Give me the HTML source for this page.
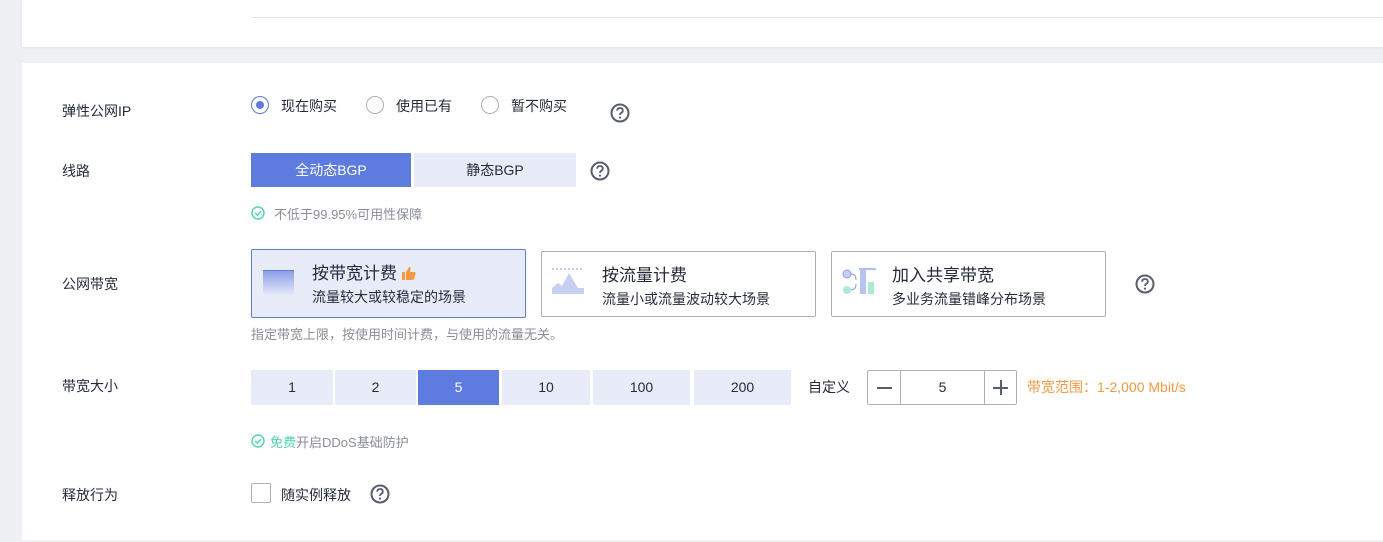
<!DOCTYPE html>
<html><head><meta charset="utf-8"><style>
body{margin:0;width:1383px;height:542px;background:#eff0f4;position:relative;overflow:hidden;font-family:"Liberation Sans","Noto Sans CJK SC",sans-serif;font-size:14px;color:#252b3a}
.a{position:absolute}
.card{position:absolute;left:22px;right:0;background:#fff}
.lbl{position:absolute;left:62px;font-size:14px;color:#252b3a}
.radio{position:absolute;width:16px;height:16px;border:1px solid #adb0b8;border-radius:50%;background:#fff}
.btn{position:absolute;background:#e8ecf8;text-align:center;color:#252b3a}
.sel{background:#5e7ce0;color:#fff}
.pc{position:absolute;border:1px solid #adb0b8;border-radius:2px;background:#fff}
.pc .t{position:absolute;left:60px;top:9px;font-size:17px}
.pc .s{position:absolute;left:60px;top:37px;font-size:14px}
.gray{color:#8a8e99}
</style></head><body>
<svg width="0" height="0" style="position:absolute"><defs>
<g id="q"><circle cx="10" cy="10" r="8.5" fill="none" stroke="#575d6c" stroke-width="2"/><path d="M7.2 7.8 Q7.2 5 10 5 Q12.8 5 12.8 7.6 Q12.8 9.2 11 10 Q10 10.5 10 12" fill="none" stroke="#575d6c" stroke-width="1.8"/><circle cx="10" cy="14.6" r="1.1" fill="#575d6c"/></g>
<g id="ck"><circle cx="7" cy="7" r="6" fill="none" stroke="#50d4ab" stroke-width="1.4"/><path d="M4.2 7 L6.3 9.2 L10 5.2" fill="none" stroke="#50d4ab" stroke-width="1.4"/></g>
</defs></svg>
<div class="card" style="top:0;height:47px;box-shadow:0 1px 3px rgba(0,0,0,.06)"></div>
<div class="a" style="left:251px;right:0;top:17px;height:1px;background:#dfe1e6"></div>
<div class="card" style="top:63px;height:477px"></div>

<div class="lbl" style="top:101px">弹性公网IP</div>
<div class="radio" style="left:251px;top:96px;border-color:#5e7ce0"><div class="a" style="left:4px;top:4px;width:8px;height:8px;border-radius:50%;background:#5e7ce0"></div></div>
<div class="a" style="left:281px;top:96px">现在购买</div>
<div class="radio" style="left:366px;top:96px"></div>
<div class="a" style="left:396px;top:96px">使用已有</div>
<div class="radio" style="left:481px;top:96px"></div>
<div class="a" style="left:511px;top:96px">暂不购买</div>
<svg class="a" style="left:610px;top:103px" width="20" height="20"><use href="#q"/></svg>

<div class="lbl" style="top:161px">线路</div>
<div class="btn sel" style="left:251px;top:153px;width:160px;height:34px;line-height:34px">全动态BGP</div>
<div class="btn" style="left:414px;top:153px;width:162px;height:34px;line-height:34px">静态BGP</div>
<svg class="a" style="left:590px;top:161px" width="20" height="20"><use href="#q"/></svg>
<svg class="a" style="left:251px;top:206px" width="14" height="14"><use href="#ck"/></svg>
<div class="a gray" style="left:274px;top:204px;font-size:13px">不低于99.95%可用性保障</div>

<div class="lbl" style="top:274px">公网带宽</div>
<div class="pc" style="left:251px;top:249px;width:273px;height:67px;background:#e8ecf8;border-color:#5e7ce0">
 <div class="a" style="left:11px;top:20px;width:31px;height:25px;background:linear-gradient(#8c9ee8,#e8ecf8);border-top:1px solid #5e7ce0"></div>
 <div class="t">按带宽计费 <svg width="14" height="14" style="vertical-align:-1px"><rect x="0" y="6" width="3" height="8" fill="#fa9841"/><path d="M4 6 L7 1 Q9 1 8.5 4 L8 6 L13 6 Q14 7 13.5 8 L12 13 Q11.5 14 10 14 L4 14Z" fill="#fa9841"/></svg></div><div class="s">流量较大或较稳定的场景</div></div>
<div class="pc" style="left:541px;top:251px;width:273px;height:64px">
 <svg class="a" style="left:10px;top:16px" width="32" height="26"><line x1="0" y1="1" x2="32" y2="1" stroke="#8c9ee8" stroke-dasharray="2 2"/><path d="M0 20 L6 15 L10 18 L17 5 L26 20 L32 20 L32 26 L0 26Z" fill="#c8d0f2"/></svg>
 <div class="t">按流量计费</div><div class="s">流量小或流量波动较大场景</div></div>
<div class="pc" style="left:831px;top:251px;width:273px;height:64px">
 <svg class="a" style="left:10px;top:16px" width="36" height="28"><circle cx="5" cy="6" r="4" fill="#c8d0f2" stroke="#8c9ee8"/><circle cx="5" cy="22" r="4" fill="#a8ecd6"/><path d="M9 6 Q14 6 14 12 M9 22 Q14 22 14 16" stroke="#8c9ee8" fill="none"/><rect x="18" y="2" width="6" height="24" fill="#b8c4f0"/><rect x="26" y="14" width="6" height="12" fill="#a8ecd6"/><line x1="17" y1="1" x2="34" y2="1" stroke="#5e7ce0"/></svg>
 <div class="t">加入共享带宽</div><div class="s">多业务流量错峰分布场景</div></div>
<svg class="a" style="left:1135px;top:274px" width="20" height="20"><use href="#q"/></svg>
<div class="a gray" style="left:251px;top:324px;font-size:13px">指定带宽上限，按使用时间计费，与使用的流量无关。</div>

<div class="lbl" style="top:376px">带宽大小</div>
<div class="btn" style="left:251px;top:370px;width:82px;height:35px;line-height:35px">1</div>
<div class="btn" style="left:335px;top:370px;width:81px;height:35px;line-height:35px">2</div>
<div class="btn sel" style="left:418px;top:370px;width:81px;height:35px;line-height:35px">5</div>
<div class="btn" style="left:502px;top:370px;width:88px;height:35px;line-height:35px">10</div>
<div class="btn" style="left:593px;top:370px;width:97px;height:35px;line-height:35px">100</div>
<div class="btn" style="left:694px;top:370px;width:97px;height:35px;line-height:35px">200</div>
<div class="a" style="left:808px;top:377px">自定义</div>
<div class="a" style="left:867px;top:370px;width:148px;height:33px;border:1px solid #adb0b8;border-radius:2px">
 <div class="a" style="left:32px;top:0;width:1px;height:33px;background:#adb0b8"></div>
 <div class="a" style="left:116px;top:0;width:1px;height:33px;background:#adb0b8"></div>
 <div class="a" style="left:9px;top:16px;width:15px;height:1.5px;background:#575d6c"></div>
 <div class="a" style="left:125px;top:16px;width:15px;height:1.5px;background:#575d6c"></div>
 <div class="a" style="left:132px;top:9px;width:1.5px;height:15px;background:#575d6c"></div>
 <div class="a" style="left:33px;width:83px;top:8px;text-align:center">5</div>
</div>
<div class="a" style="left:1027px;top:377px;color:#fa9841">带宽范围：1-2,000 Mbit/s</div>

<svg class="a" style="left:251px;top:434px" width="14" height="14"><use href="#ck"/></svg>
<div class="a" style="left:270px;top:432px;font-size:13px"><span style="color:#50d4ab">免费</span><span class="gray">开启DDoS基础防护</span></div>

<div class="lbl" style="top:485px">释放行为</div>
<div class="a" style="left:251px;top:483px;width:18px;height:18px;border:1px solid #adb0b8;border-radius:2px"></div>
<div class="a" style="left:281px;top:485px">随实例释放</div>
<svg class="a" style="left:370px;top:484px" width="20" height="20"><use href="#q"/></svg>
</body></html>
